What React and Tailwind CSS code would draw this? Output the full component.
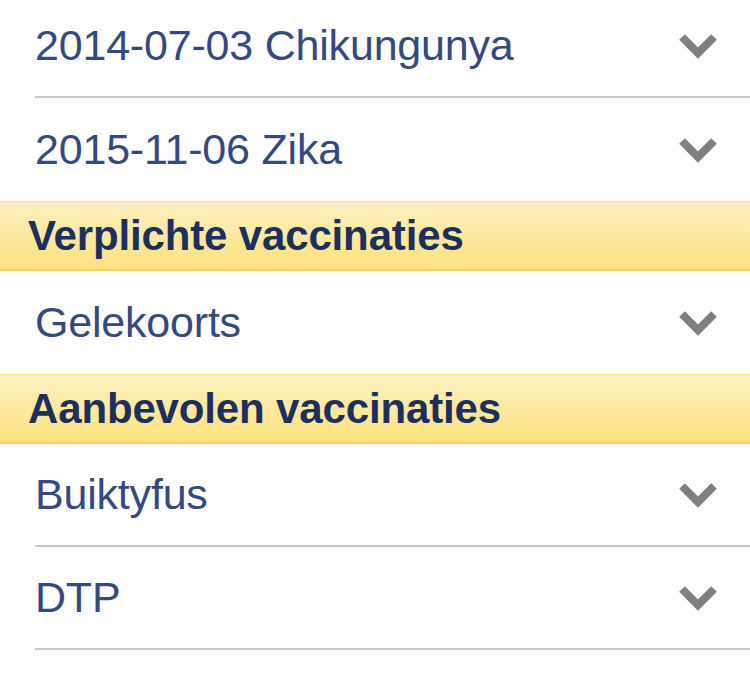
import React from "react";

function Chevron() {
  return (
    <svg width="42" height="28" viewBox="0 0 42 28" className="shrink-0">
      <polyline
        points="5,5 21,21 37,5"
        fill="none"
        stroke="#808080"
        strokeWidth="8"
        strokeLinecap="butt"
        strokeLinejoin="miter"
      />
    </svg>
  );
}

function Row({ label, divider = true }) {
  return (
    <div className="pl-[35px] bg-white">
      <div
        className={`h-[103px] flex items-center justify-between pr-[31px] ${
          divider ? "border-b-2 border-[#c8c8cc]" : ""
        }`}
      >
        <span className="text-[43px] leading-none text-[#34497f] tracking-[-0.2px]">
          {label}
        </span>
        <Chevron />
      </div>
    </div>
  );
}

function Header({ label }) {
  return (
    <div className="h-[70px] flex items-center pl-[28px] bg-gradient-to-b from-[#fcf0c0] to-[#fee27c] border-t border-[#fde48a] border-b-2 border-b-[#f8d65e]">
      <span className="text-[42px] leading-none font-bold text-[#1c2f5e] tracking-[-0.15px]">
        {label}
      </span>
    </div>
  );
}

export default function App() {
  return (
    <div
      className="w-[750px] h-[675px] overflow-hidden bg-white"
      style={{ fontFamily: '"Liberation Sans", Arial, Helvetica, sans-serif' }}
    >
      <div className="-mt-[5px] flex flex-col">
        <Row label="2014-07-03 Chikungunya" />
        <Row label="2015-11-06 Zika" divider={false} />
        <Header label="Verplichte vaccinaties" />
        <Row label="Gelekoorts" divider={false} />
        <Header label="Aanbevolen vaccinaties" />
        <Row label="Buiktyfus" />
        <Row label="DTP" />
      </div>
    </div>
  );
}
